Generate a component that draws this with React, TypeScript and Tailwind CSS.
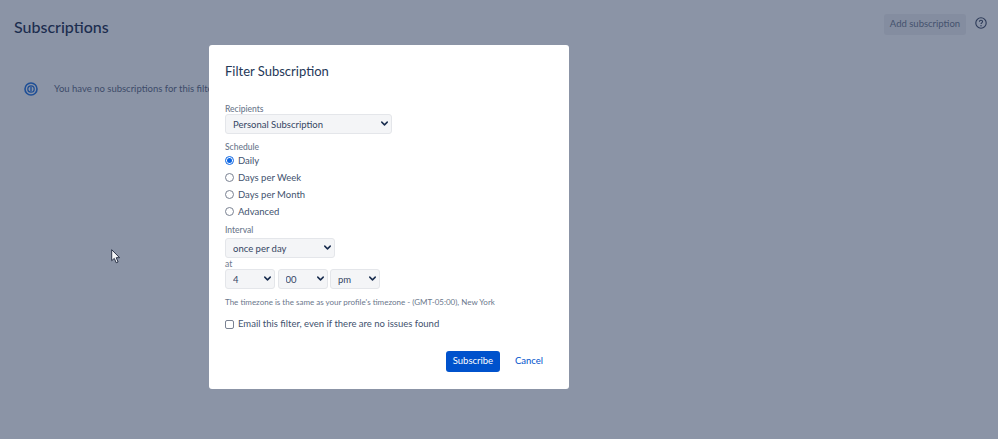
import { ChevronDown } from "lucide-react";

function Select({ value, options, width }: { value: string; options: string[]; width: string }) {
  return (
    <div className={`relative h-[20px] ${width}`}>
      <select
        defaultValue={value}
        className="block h-full w-full appearance-none rounded-[3px] border border-[#e4e6ea] bg-[#f4f5f7] pl-[7px] pt-[2px] text-[9.5px] leading-[16px] text-[#344563] outline-none"
      >
        {options.map((o) => (
          <option key={o}>{o}</option>
        ))}
      </select>
      <ChevronDown
        size={11}
        strokeWidth={3.2}
        className="pointer-events-none absolute right-[2px] top-[4px] text-[#172b4d]"
      />
    </div>
  );
}

function Radio({ label, checked = false }: { label: string; checked?: boolean }) {
  return (
    <label className="flex h-[17px] items-center gap-[4px] text-[9.5px] text-[#42526e]">
      <span
        className={`flex h-[9px] w-[9px] items-center justify-center rounded-full border ${
          checked ? "border-[#0c66e4]" : "border-[#7a8292]"
        } bg-white`}
      >
        {checked && <span className="h-[5px] w-[5px] rounded-full bg-[#0c66e4]" />}
      </span>
      <span className="pt-[1px]">{label}</span>
    </label>
  );
}

export default function App() {
  return (
    <div className="relative h-[439px] w-[998px] overflow-hidden bg-[#8b94a6] font-['Lato',sans-serif] text-[#172b4d]">
      <header className="flex items-start justify-between pl-[14px] pr-[11px] pt-[14px]">
        <h1 className="text-[16px] font-medium leading-[26px] text-[#1c2d4f]">Subscriptions</h1>
        <div className="flex items-center gap-[9px]">
          <button className="h-[21px] w-[82px] rounded-[3px] bg-[#848da0] text-[9.5px] text-[#44526e]">
            Add subscription
          </button>
          <svg width="12" height="12" viewBox="0 0 12 12" fill="none" className="mb-[4px] text-[#2c3a58]">
            <circle cx="6" cy="6" r="5.2" stroke="currentColor" strokeWidth="1.1" />
            <path d="M4.4 4.7c0-.9.7-1.5 1.6-1.5s1.6.6 1.6 1.4c0 1.2-1.6 1.3-1.6 2.5" stroke="currentColor" strokeWidth="1.1" />
            <circle cx="6" cy="8.8" r=".7" fill="currentColor" />
          </svg>
        </div>
      </header>

      <div className="ml-[24px] mt-[41px] flex items-center gap-[16px]">
        <svg width="14" height="14" viewBox="0 0 14 14" fill="none">
          <circle cx="7" cy="7" r="6" stroke="#1f4f96" strokeWidth="1.6" />
          <circle cx="7" cy="7" r="3.2" stroke="#1f4f96" strokeWidth="1.3" />
          <rect x="6.3" y="4.6" width="1.4" height="4.8" fill="#1f4f96" />
        </svg>
        <p className="pt-[1px] text-[9.5px] text-[#3d4b69]">You have no subscriptions for this filter</p>
      </div>

      {/* mouse pointer sits on the overlay */}
      <svg width="10" height="15" viewBox="0 0 10 15" className="absolute left-[111px] top-[249px]">
        <path d="M.7.7v11l2.6-2.3 1.9 4.4 1.9-.8-1.9-4.3h3.4z" fill="#f4f5f7" stroke="#2a3347" strokeWidth="1" />
      </svg>

      {/* modal */}
      <div className="absolute left-[209px] top-[45px] flex h-[344px] w-[360px] flex-col rounded-[3px] bg-white pl-[16px] pr-[26px] pt-[16px]">
        <h2 className="text-[13px] leading-[20px] text-[#253858]">Filter Subscription</h2>

        <label className="mb-[-1px] mt-[22px] text-[8.5px] font-medium leading-[12px] text-[#6b778c]">Recipients</label>
        <Select value="Personal Subscription" options={["Personal Subscription"]} width="w-[167px]" />

        <label className="mt-[7px] text-[8.5px] font-medium leading-[12px] text-[#6b778c]">Schedule</label>
        <div className="mt-[-1px] flex flex-col">
          <Radio label="Daily" checked />
          <Radio label="Days per Week" />
          <Radio label="Days per Month" />
          <Radio label="Advanced" />
        </div>

        <label className="mt-[4px] text-[8.5px] font-medium leading-[12px] text-[#6b778c]">Interval</label>
        <div className="mt-[2px]">
          <Select value="once per day" options={["once per day"]} width="w-[110px]" />
        </div>
        <span className="mb-[-1px] text-[8.5px] leading-[12px] text-[#6b778c]">at</span>
        <div className="flex gap-[2.5px]">
          <Select value="4" options={["4"]} width="w-[50px]" />
          <Select value="00" options={["00"]} width="w-[50px]" />
          <Select value="pm" options={["pm"]} width="w-[50px]" />
        </div>

        <p className="mt-[7px] text-[8px] leading-[12px] text-[#6b778c]">
          The timezone is the same as your profile's timezone - (GMT-05:00), New York
        </p>

        <label className="mt-[9px] flex items-center gap-[4px] text-[9.5px] text-[#42526e]">
          <span className="h-[9px] w-[9px] rounded-[2px] border border-[#7a8292] bg-white" />
          Email this filter, even if there are no issues found
        </label>

        <div className="mt-auto mb-[17px] flex items-center justify-end gap-[15px]">
          <button className="h-[21px] w-[54px] rounded-[3px] bg-[#0052cc] text-[9.5px] text-white">Subscribe</button>
          <button className="text-[9.5px] text-[#0052cc]">Cancel</button>
        </div>
      </div>
    </div>
  );
}
